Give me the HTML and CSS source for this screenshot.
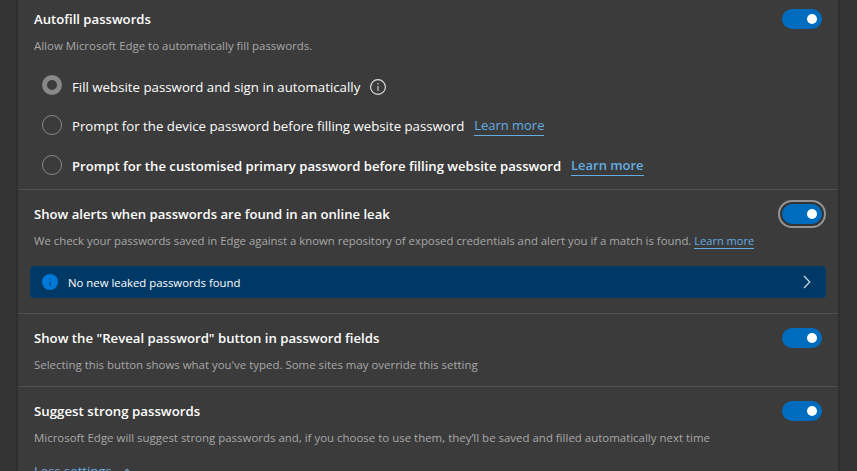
FILE: index.html
```html
<!DOCTYPE html>
<html lang="en">
<head>
<meta charset="utf-8">
<title>Passwords</title>
<link rel="stylesheet" href="styles.css">
</head>
<body>
<main class="card">
  <section class="setting">
    <div class="head"><h2>Autofill passwords</h2><span class="toggle"></span></div>
    <p class="desc">Allow Microsoft Edge to automatically fill passwords.</p>
    <div class="options">
      <label class="option first"><span class="radio checked"></span><span class="label">Fill website password and sign in automatically</span>
        <svg class="info" width="16" height="16" viewBox="0 0 16 16"><circle cx="8" cy="8" r="7.4" fill="none" stroke="#e4e4e4" stroke-width="1.1"/><path d="M8 7v5M8 4v1.5" stroke="#bdbdbd" stroke-width="1.3"/></svg>
      </label>
      <label class="option"><span class="radio"></span><span class="label device">Prompt for the device password before filling website password</span><a class="link">Learn more</a></label>
      <label class="option strong"><span class="radio"></span><span class="label">Prompt for the customised primary password before filling website password</span><a class="link">Learn more</a></label>
    </div>
  </section>
  <section class="setting">
    <div class="head"><h2>Show alerts when passwords are found in an online leak</h2><span class="toggle focused"></span></div>
    <p class="desc leak">We check your passwords saved in Edge against a known repository of exposed credentials and alert you if a match is found. <a class="link small">Learn more</a></p>
    <div class="banner">
      <svg width="16" height="16" viewBox="0 0 16 16"><circle cx="8" cy="8" r="8" fill="#0078d7"/><path d="M8 7v5M8 4v1.5" stroke="#07539a" stroke-width="1.4"/></svg>
      <span class="message">No new leaked passwords found</span>
      <svg width="8" height="14" viewBox="0 0 8 14"><path d="M1 1l5.8 6L1 13" fill="none" stroke="#d0dae3" stroke-width="1.2"/></svg>
    </div>
  </section>
  <section class="setting">
    <div class="head"><h2 class="reveal">Show the "Reveal password" button in password fields</h2><span class="toggle"></span></div>
    <p class="desc">Selecting this button shows what you've typed. Some sites may override this setting</p>
  </section>
  <section class="setting">
    <div class="head"><h2 class="suggest">Suggest strong passwords</h2><span class="toggle"></span></div>
    <p class="desc suggest-desc">Microsoft Edge will suggest strong passwords and, if you choose to use them, they’ll be saved and filled automatically next time</p>
    <div class="less">Less settings <svg width="10" height="6" viewBox="0 0 10 6"><path d="M1 5.2l4-4 4 4" fill="none" stroke="#69afe5" stroke-width="1.1"/></svg></div>
  </section>
</main>
</body>
</html>
```
FILE: styles.css
```css
* { box-sizing: border-box; }
body {
  margin: 0;
  height: 471px;
  overflow: hidden;
  background: #333;
  color: #fff;
  font-family: "Open Sans", "Noto Sans", sans-serif;
}
.card {
  width: 820px;
  height: 500px;
  margin-left: 18px;
  background: #3b3b3b;
  box-shadow: 0 0 3px rgba(0, 0, 0, .35);
}
.setting { padding: 14px 12px 13px 16px; border-top: 1px solid #505050; }
.setting:first-child { padding-top: 9px; padding-bottom: 4px; border-top: 0; }
.setting:nth-child(2) { padding-bottom: 15px; }
.head { display: flex; justify-content: space-between; height: 20px; padding-right: 4px; }
h2 { margin: 0; font-size: 13.14px; font-weight: 600; line-height: 20px; white-space: nowrap; }
.reveal { font-size: 13.18px; }
.suggest { font-size: 13.27px; }
.toggle {
  display: flex;
  align-items: center;
  justify-content: flex-end;
  width: 40px;
  height: 20px;
  padding-right: 5px;
  border-radius: 10px;
  background: #006cbe;
}
.toggle::after { content: ""; width: 10px; height: 10px; border-radius: 50%; background: #fff; }
.toggle.focused { box-shadow: 0 0 0 2px #333; outline: 2px solid #949494; outline-offset: 2px; }
.desc { margin: 9px 0 0; font-size: 11.44px; line-height: 16px; color: #a8a8a8; white-space: nowrap; }
.leak { font-size: 11.375px; }
.suggest-desc { font-size: 11.46px; }
.options { margin-top: 11px; padding-left: 8px; }
.option { display: flex; align-items: center; height: 40px; font-size: 13.27px; line-height: 20px; white-space: nowrap; }
.radio { width: 20px; height: 20px; margin-right: 10px; border: 1px solid #888; border-radius: 50%; }
.radio.checked { border: 5px solid #888; }
.label { padding-top: 2px; }
.first .label { padding-top: 4px; }
.device { font-size: 13.24px; }
.strong { font-size: 13.14px; font-weight: 600; }
.info { margin: 4px 0 0 10px; }
.link { margin-left: 10px; color: #63ade5; border-bottom: 1px solid #63ade5; font-size: 12.95px; line-height: 20px; }
.link.small { display: inline-block; margin-left: 0; font-size: 11.07px; line-height: 15px; }
.banner {
  display: flex;
  align-items: center;
  height: 32px;
  margin: 17px 0 0 -4px;
  padding: 0 15px 0 12px;
  border-radius: 4px;
  background: #003966;
}
.message { flex: 1; padding: 1px 0 0 10px; font-size: 11.36px; }
.less { display: flex; align-items: center; gap: 10px; margin-top: 15px; color: #69afe5; font-size: 13.1px; line-height: 20px; }
```
